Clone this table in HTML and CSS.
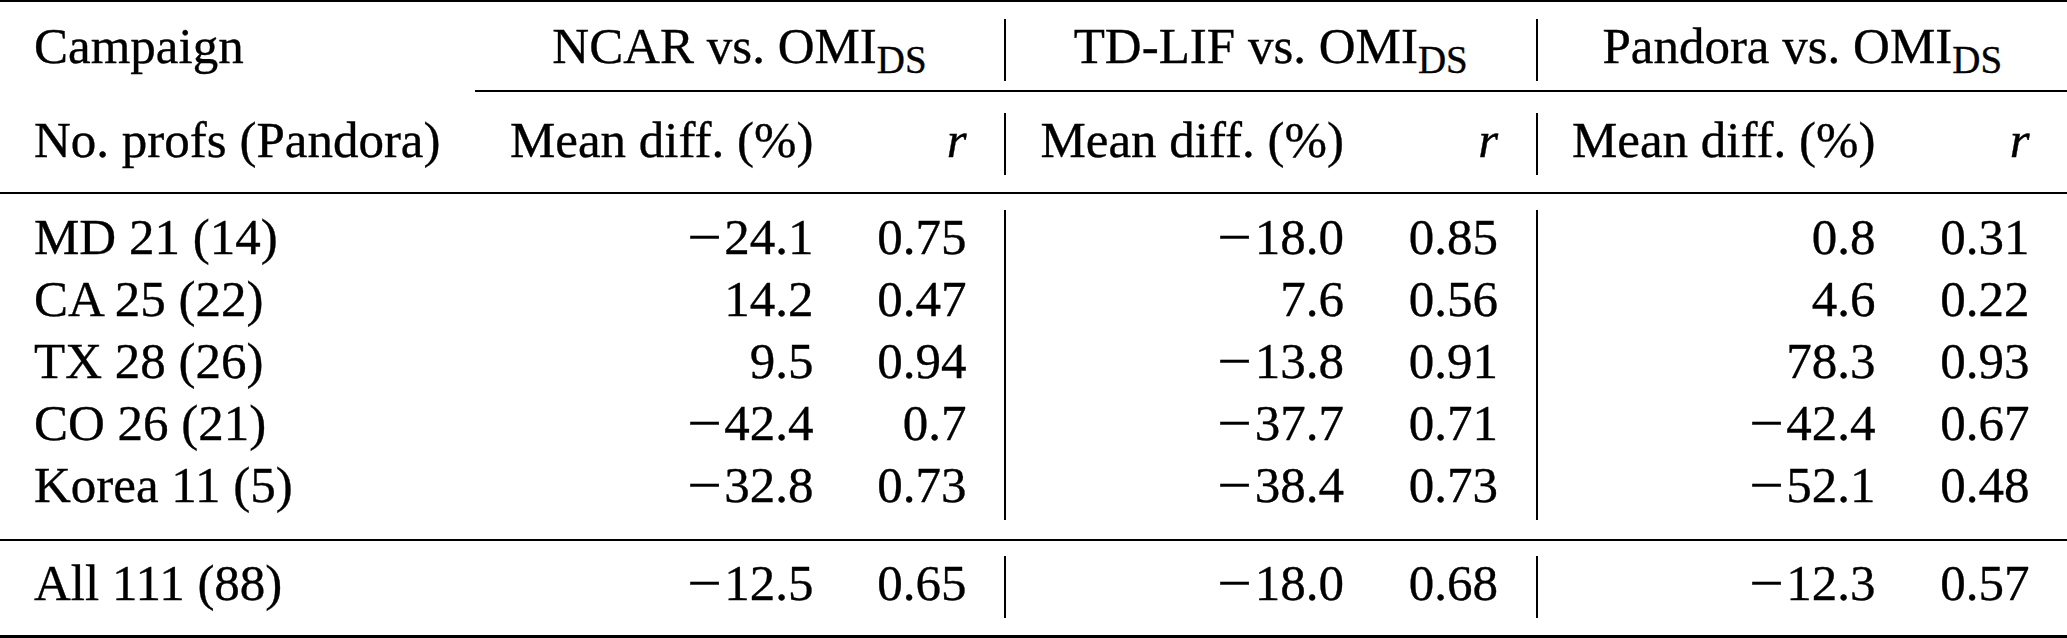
FILE: index.html
```html
<!DOCTYPE html>
<html lang="en">
<head>
<meta charset="utf-8">
<title>Campaign comparison table</title>
<link rel="stylesheet" href="styles.css">
</head>
<body>
<div class="table">
  <div class="rule rule-top"></div>

  <div class="cell c-label">Campaign</div>
  <div class="cell c-group">NCAR vs. OMI<sub>DS</sub></div>
  <div class="cell c-group sep">TD-LIF vs. OMI<sub>DS</sub></div>
  <div class="cell c-group sep">Pandora vs. OMI<sub>DS</sub></div>

  <div class="rule rule-cmid"></div>

  <div class="cell c-label">No. profs (Pandora)</div>
  <div class="cell c-mean">Mean diff. (%)</div>
  <div class="cell c-r"><i>r</i></div>
  <div class="cell c-mean sep">Mean diff. (%)</div>
  <div class="cell c-r"><i>r</i></div>
  <div class="cell c-mean sep">Mean diff. (%)</div>
  <div class="cell c-r"><i>r</i></div>

  <div class="rule rule-mid"></div>

  <div class="cell c-label">MD 21 (14)</div>
  <div class="cell c-mean"><span class="minus">−</span>24.1</div>
  <div class="cell c-r">0.75</div>
  <div class="cell c-mean sep"><span class="minus">−</span>18.0</div>
  <div class="cell c-r">0.85</div>
  <div class="cell c-mean sep">0.8</div>
  <div class="cell c-r">0.31</div>

  <div class="cell c-label">CA 25 (22)</div>
  <div class="cell c-mean">14.2</div>
  <div class="cell c-r">0.47</div>
  <div class="cell c-mean sep">7.6</div>
  <div class="cell c-r">0.56</div>
  <div class="cell c-mean sep">4.6</div>
  <div class="cell c-r">0.22</div>

  <div class="cell c-label">TX 28 (26)</div>
  <div class="cell c-mean">9.5</div>
  <div class="cell c-r">0.94</div>
  <div class="cell c-mean sep"><span class="minus">−</span>13.8</div>
  <div class="cell c-r">0.91</div>
  <div class="cell c-mean sep">78.3</div>
  <div class="cell c-r">0.93</div>

  <div class="cell c-label">CO 26 (21)</div>
  <div class="cell c-mean"><span class="minus">−</span>42.4</div>
  <div class="cell c-r">0.7</div>
  <div class="cell c-mean sep"><span class="minus">−</span>37.7</div>
  <div class="cell c-r">0.71</div>
  <div class="cell c-mean sep"><span class="minus">−</span>42.4</div>
  <div class="cell c-r">0.67</div>

  <div class="cell c-label">Korea 11 (5)</div>
  <div class="cell c-mean"><span class="minus">−</span>32.8</div>
  <div class="cell c-r">0.73</div>
  <div class="cell c-mean sep"><span class="minus">−</span>38.4</div>
  <div class="cell c-r">0.73</div>
  <div class="cell c-mean sep"><span class="minus">−</span>52.1</div>
  <div class="cell c-r">0.48</div>

  <div class="rule rule-sum"></div>

  <div class="cell c-label">All 111 (88)</div>
  <div class="cell c-mean"><span class="minus">−</span>12.5</div>
  <div class="cell c-r">0.65</div>
  <div class="cell c-mean sep"><span class="minus">−</span>18.0</div>
  <div class="cell c-r">0.68</div>
  <div class="cell c-mean sep"><span class="minus">−</span>12.3</div>
  <div class="cell c-r">0.57</div>

  <div class="rule rule-bottom"></div>
</div>
</body>
</html>
```

FILE: styles.css
```css
html, body {
  margin: 0;
  padding: 0;
  background: #ffffff;
  overflow: hidden;
}

.table {
  display: grid;
  grid-template-columns: 475px 371.5px 157.5px 373px 158.5px 373px 158.5px;
  width: 2067px;
  font-family: "Liberation Serif", "Tinos", "Times New Roman", serif;
  font-size: 51px;
  color: #000;
  -webkit-text-stroke: 0.35px #000;
}

.cell {
  box-sizing: border-box;
  line-height: 55px;
  padding-bottom: 7px;
  white-space: nowrap;
}

.c-label {
  grid-column: 1;
  padding-left: 34px;
  text-align: left;
}

.c-group {
  grid-column: span 2;
  text-align: center;
}

.c-mean {
  text-align: right;
  padding-right: 33px;
}

.c-r {
  text-align: right;
  padding-right: 37.5px;
}

.sep {
  border-left: 2px solid #000;
}

.c-r i {
  font-style: italic;
}

sub {
  font-size: 39px;
  line-height: 0;
  vertical-align: -9.5px;
}

.minus {
  display: inline-block;
  width: 0.778em;
  text-align: center;
  transform: scaleX(1.2);
}

.rule {
  grid-column: 1 / -1;
  background: #000;
}

.rule-top {
  height: 2px;
  margin-bottom: 16.5px;
}

.rule-cmid {
  grid-column: 2 / -1;
  height: 2px;
  margin-top: 9px;
  margin-bottom: 21px;
}

.rule-mid {
  height: 2.5px;
  margin-top: 17px;
  margin-bottom: 16px;
}

.rule-sum {
  height: 2px;
  margin-top: 18.5px;
  margin-bottom: 15px;
}

.rule-bottom {
  height: 3.5px;
  margin-top: 17px;
}
```
